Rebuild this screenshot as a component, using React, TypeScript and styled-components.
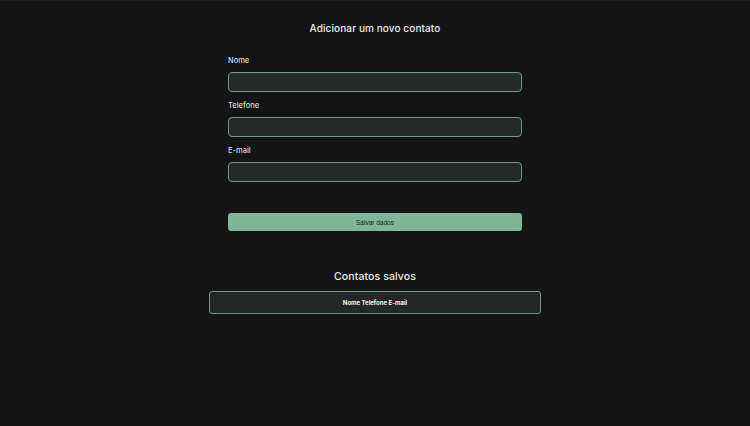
import React from 'react';
import styled, { createGlobalStyle } from 'styled-components';

const GlobalStyle = createGlobalStyle`
  body {
    margin: 0;
    background: #141414;
    font-family: 'Inter', 'Open Sans', sans-serif;
    color: #e8e8e8;
  }
`;

const Page = styled.main`
  min-height: 426px;
  box-sizing: border-box;
  border-top: 1px solid #1f1f1f;
  padding-top: 20px;
  display: flex;
  flex-direction: column;
  align-items: center;
`;

const Title = styled.h1<{ size: number }>`
  margin: 0;
  font-size: ${(p) => p.size}px;
  line-height: ${(p) => p.size + 5}px;
  font-weight: 500;
  color: #ececec;
  letter-spacing: 0.1px;
`;

const Form = styled.form`
  width: 294px;
  margin-top: 20px;
  display: flex;
  flex-direction: column;
`;

const Label = styled.label`
  font-size: 7.5px;
  line-height: 10px;
  font-weight: 500;
  color: #d8d8d8;
  margin-bottom: 6px;
`;

const Input = styled.input`
  height: 20px;
  box-sizing: border-box;
  background: #252a28;
  border: 1px solid #6b9c82;
  border-radius: 4px;
  margin: 0 0 9px;
  outline: none;
  color: #eee;
`;

const Button = styled.button`
  margin-top: 22px;
  height: 18px;
  background: #80b59a;
  border: none;
  border-radius: 3px;
  font-family: 'Liberation Sans', Arial, sans-serif;
  font-size: 6.5px;
  color: #18211c;
`;

const Saved = styled.section`
  margin-top: 38px;
  display: flex;
  flex-direction: column;
  align-items: center;
`;

const Table = styled.div`
  width: 332px;
  height: 23px;
  margin-top: 6px;
  box-sizing: border-box;
  background: #232826;
  border: 1px solid #6b9c82;
  border-radius: 3px;
  display: flex;
  align-items: center;
  justify-content: center;
  font-size: 6px;
  font-weight: 700;
  color: #f4f4f4;
`;

export default function App() {
  return (
    <Page>
      <GlobalStyle />
      <Title size={10}>Adicionar um novo contato</Title>
      <Form onSubmit={(e) => e.preventDefault()}>
        <Label>Nome</Label>
        <Input type="text" />
        <Label>Telefone</Label>
        <Input type="text" />
        <Label>E-mail</Label>
        <Input type="email" />
        <Button type="submit">Salvar dados</Button>
      </Form>
      <Saved>
        <Title size={10.5}>Contatos salvos</Title>
        <Table>Nome Telefone E-mail</Table>
      </Saved>
    </Page>
  );
}
